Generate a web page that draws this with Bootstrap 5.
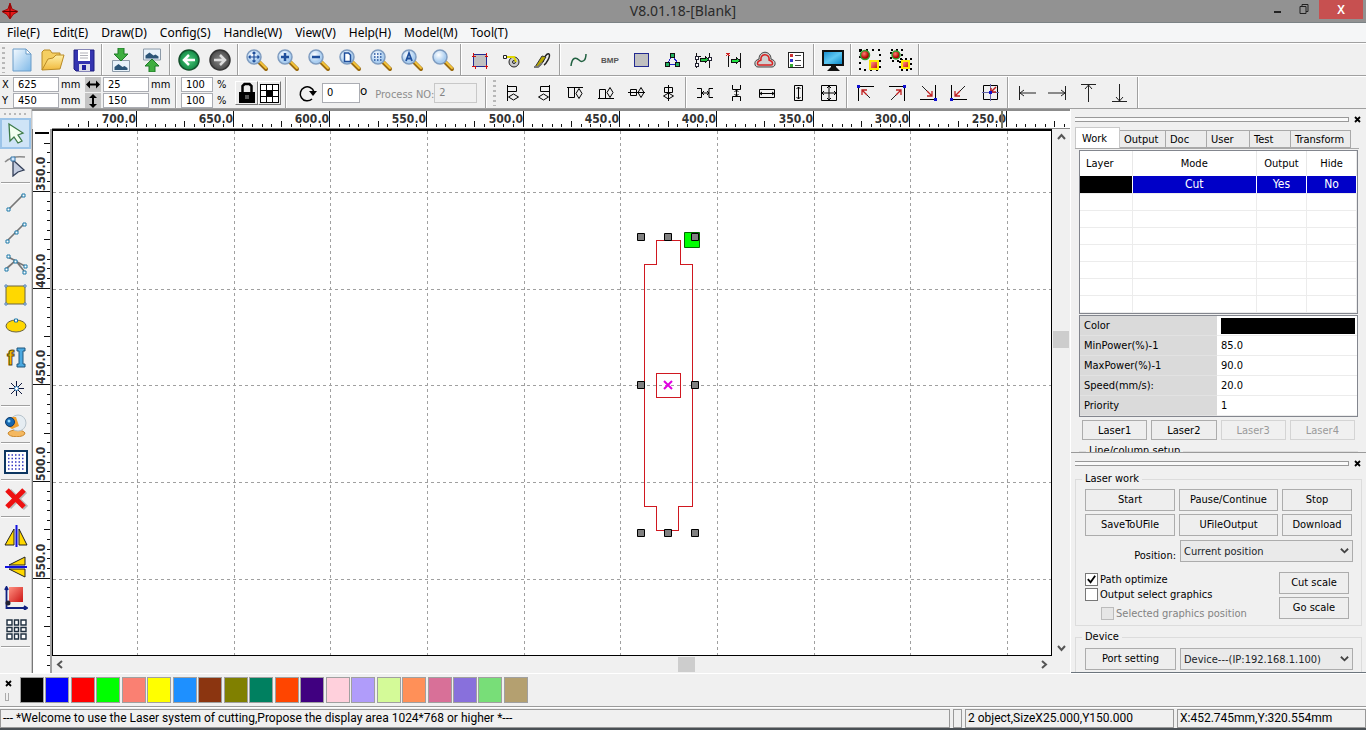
<!DOCTYPE html>
<html lang="en">
<head>
<meta charset="utf-8">
<meta name="viewport" content="width=device-width, initial-scale=1">
<title>V8.01.18-[Blank]</title>
<link href="https://cdn.jsdelivr.net/npm/bootstrap@5.3.0/dist/css/bootstrap.min.css" rel="stylesheet">
<style>
:root{--face:#f0f0f0;--line:#a0a0a0;--ui:"Noto Sans","Open Sans",sans-serif;--dlg:"DejaVu Sans Condensed","Noto Sans",sans-serif}
body{font:12px/16px var(--ui);color:#000;background:var(--face);overflow:hidden}
svg{display:block}
.titlebar{height:24px;background:#929292;border-bottom:1px solid #7b8285;font-size:14px;color:#2a2a2a}
.titlebar .side{width:132px}
.win{border:0;background:none;padding:0;width:26px;height:19px}
.win-x{background:#c75050;color:#fff;width:44px;font-size:12px;font-weight:600;margin-right:3px}
.menubar{height:21px;background:#f5f6f7;border-bottom:1px solid #a0a0a0}
.menubar a{color:#000;text-decoration:none;font-size:12px;line-height:19px;padding:0 6px 0 7px;white-space:nowrap}
.bar{height:34px;border-top:1px solid #fff;border-bottom:1px solid var(--line)}
.bar-b{height:33px}
.tool{border:0;background:none;padding:0;width:31px;height:31px;display:flex;align-items:center;justify-content:center;flex:none;border-radius:0}
.tool.active{background:#cfe4f7;border:2px solid #9cc4e8}
.tool svg{width:24px;height:24px}
.vsep{width:2px;height:31px;margin:0 2px;background:var(--line);border-right:1px solid #fff;flex:none}
.hsep{height:2px;margin:2px 1px;background:var(--line);border-bottom:1px solid #fff;flex:none}
.grip{width:3px;height:26px;background:repeating-linear-gradient(#b8b8b8 0 2px,transparent 2px 5px);margin:0 1px 0 2px;flex:none}
.hgrip{height:2px;margin:4px 4px 3px;background:repeating-linear-gradient(90deg,#b8b8b8 0 2px,transparent 2px 5px);flex:none}
.coords{display:grid;row-gap:1px;font:11px/15px var(--dlg)}
.coords-pos{grid-template-columns:13px 46px 26px 18px 46px 26px}
.coords-pct{grid-template-columns:32px 22px}
.coords label,.coords span{padding-left:2px}
.box{border:1px solid #abadb3;border-radius:0;background:#fff;font:11px/13px var(--dlg);padding:0 4px;height:15px;color:#000;min-width:0;width:100%}
.box-tall{height:20px}
.box:disabled{background:var(--face);color:#838383;border-color:#c8c8c8}
.tog{border:0;padding:0;background:#c4c4c4;margin-right:2px}
.tog svg{width:16px;height:15px}
.raised{border:1px solid #fff;border-right-color:#777;border-bottom-color:#777;background:#ececec;padding:0;width:23px;height:24px;flex:none}
.proc{color:#8d8d8d;font:11px/16px var(--dlg)}
.toolcol{width:32px;border-right:1px solid #c8c8c8}
.work{display:grid;grid-template-columns:20px minmax(0,1fr) 18px;grid-template-rows:18px minmax(0,1fr) 17px;border-top:2px solid #8c8c8c}
.ruler{background:#fff;overflow:hidden}
.ruler-h{grid-column:2/4;border-bottom:1px solid #888}
.ruler-v{grid-row:2/4;border-right:2px solid #a0a0a0;border-left:1px solid #777}
.ruler svg,.sheet svg{width:100%;height:100%}
.ruler text{font:bold 12px "DejaVu Sans Condensed","Noto Sans",sans-serif;fill:#333}
.sheet{border:solid #000;border-width:2px 1px 1px 1px;background:#fff;overflow:hidden}
.scr{background:var(--face);color:#444}
.thumb{background:#cdcdcd}
.dock{width:296px;border-left:1px solid #fff;font:11px/16px var(--dlg)}
.dock-top{height:344px;border-bottom:1px solid #9a9a9a;overflow:hidden}
.dock-cap{height:15px;padding:5px 4px 0 4px}
.dock-bars{height:5px;border:1px solid #999;border-left:0;background:#fafafa}
.xbtn{border:0;background:none;padding:0;width:9px;height:9px;flex:none}
.nav-tabs.dlg{--bs-nav-tabs-border-color:#a9a9a9;--bs-nav-tabs-border-radius:0;height:21px;margin:0 7px 0 4px;align-items:flex-end}
.dlg .nav-link{padding:0 0 0 4px;color:#000;border:1px solid #a9a9a9;border-left-width:0;background:#ececec;height:18px;line-height:17px;margin:0;text-align:left;border-radius:0;flex:none}
.dlg .nav-link.active{height:21px;background:#fff;border:1px solid #c9c9c9;border-bottom:0;padding-left:6px}
.frame{border:1px solid #83868e;background:#fff;margin:1px 8px}
.layers{font-size:11px;line-height:16px;margin:0;table-layout:fixed;width:100%}
.layers th{font-weight:400;height:25px;padding:0;text-align:center;border-right:1px solid #e8e8e8;vertical-align:middle}
.layers th:first-child{text-align:left;padding-left:6px}
.layers td{height:17px;padding:0;border-right:1px solid #ececec;border-bottom:1px solid #ececec;text-align:center;line-height:15px}
.layers .sel td{background:#0000c8;color:#fff;border-right-color:#fff;font-size:12px}
.layers .sel td:first-child{background:#000}
.props td{height:20px;padding:0 4px;border-bottom:1px solid #ececec}
.props td:first-child{background:#dadada;width:137px;border-color:#e2e2e2}
.props td+td{padding-right:2px}
.ink{background:#000;height:16px}
.lasers{padding:2px 11px 0}
.dbtn{font:11px/17px var(--dlg);border:1px solid #acacac;border-radius:0;background:#eee;color:#000;padding:0;height:20px;white-space:nowrap}
.dbtn:disabled{color:#9a9a9a;border-color:#d4d4d4;background:var(--face);opacity:1}
.tall{height:22px;line-height:20px}
.group{border:1px solid #dcdcdc;margin:0;padding:0 8px 0 9px;position:static}
.group legend{float:none;width:auto;font-size:11px;line-height:14px;margin:0 0 0 -3px;padding:0 3px}
.keys{display:grid;grid-template-columns:90px 99px 70px;gap:3px 4px;margin-top:3px}
.scales{gap:3px;width:70px}
.pick{font:11px/19px var(--dlg);border:1px solid #acacac;border-radius:0;padding:0 16px 0 3px;height:22px;width:173px;background:#eaeaea url("data:image/svg+xml,%3Csvg xmlns='http://www.w3.org/2000/svg' viewBox='0 0 10 8'%3E%3Cpath d='M1 1.500l4 4 4-4' fill='none' stroke='%23444' stroke-width='2'/%3E%3C/svg%3E") no-repeat right 3px center/9px 8px}
.form-check.tick{min-height:15px;margin:0;padding:0;display:flex;align-items:center;line-height:15px}
.tick .form-check-input{float:none;margin:0 2px 0 0;width:13px;height:13px;border-radius:0;border:1px solid #777;background-color:#fff;flex:none}
.tick .form-check-input:checked{background:#fff url("data:image/svg+xml,%3Csvg xmlns='http://www.w3.org/2000/svg' viewBox='0 0 12 12'%3E%3Cpath d='M2 5.500l3 3.500 5-7' fill='none' stroke='%23000' stroke-width='2'/%3E%3C/svg%3E") center/11px no-repeat}
.tick .form-check-input:disabled{background:#e6e6e6;border-color:#bbb;opacity:1}
.tick .form-check-input:disabled~label{color:#838383;opacity:1}
.palette{height:34px;border-top:1px solid #fff;border-bottom:1px solid #9a9a9a}
.swatches{width:508px}
.swatch{width:24px;height:26px;padding:0;border:1px solid #a0a0a0;border-radius:0;flex:none}
.status{height:21px;border-top:1px solid #fff;padding-top:1px;gap:3px;font-family:Roboto,"Noto Sans",sans-serif}
.cell{border:1px solid #999;height:19px;line-height:17px;padding:0 2px;white-space:nowrap;overflow:hidden}
.foot{height:2px;background:#4a5055}
.ln{fill:none;stroke:#000}
</style>
</head>
<body class="vh-100 d-flex flex-column">

<svg width="0" height="0" class="position-absolute" aria-hidden="true">
<defs>
<linearGradient id="gPage" x1="0" y1="0" x2="1" y2="1"><stop offset="0" stop-color="#f4faff"/><stop offset="1" stop-color="#7fb9e8"/></linearGradient>
<linearGradient id="gFold" x1="0" y1="0" x2="0" y2="1"><stop offset="0" stop-color="#fff0a8"/><stop offset="1" stop-color="#f0b93c"/></linearGradient>
<radialGradient id="gGreen"><stop offset="0" stop-color="#4ecb7c"/><stop offset="1" stop-color="#128a45"/></radialGradient>
<radialGradient id="gGrey"><stop offset="0" stop-color="#8a8a8a"/><stop offset="1" stop-color="#4a4a4a"/></radialGradient>
<radialGradient id="gLens" cx=".4" cy=".35"><stop offset="0" stop-color="#fff"/><stop offset="1" stop-color="#a9cdf0"/></radialGradient>
<radialGradient id="gBall" cx=".4" cy=".35"><stop offset="0" stop-color="#ff8070"/><stop offset="1" stop-color="#b00000"/></radialGradient>
<linearGradient id="gRed" x1="0" y1="0" x2="1" y2="1"><stop offset="0" stop-color="#ff9080"/><stop offset="1" stop-color="#cc1515"/></linearGradient>
<linearGradient id="gScreen" x1="0" y1="0" x2="1" y2="1"><stop offset="0" stop-color="#1a8fd0"/><stop offset=".5" stop-color="#5fc8f2"/><stop offset="1" stop-color="#0a88c8"/></linearGradient>
<marker id="mr" viewBox="0 0 6 6" refX="5" refY="3" markerWidth="6" markerHeight="6" orient="auto-start-reverse"><path d="M0 0L6 3L0 6z" fill="#c02020"/></marker>
</defs>
<symbol id="new" viewBox="0 0 24 24"><path d="M3 1h13l5 5v17H3z" fill="url(#gPage)" stroke="#6a9cc8"/><path d="M16 1v5h5z" fill="#fff" stroke="#6a9cc8"/></symbol>
<symbol id="open" viewBox="0 0 24 24"><path d="M1 22V4l2-2h6l2 3h8v5" fill="#f5cf62" stroke="#b98a25"/><path d="M1 22L7 11l5-1 3-3h8l-4 14z" fill="url(#gFold)" stroke="#b98a25"/></symbol>
<symbol id="save" viewBox="0 0 24 24"><path d="M2 2h20v21H4l-2-2z" fill="#3434b0" stroke="#1c1c80"/><path d="M6 2h12v11H6z" fill="#fff"/><path d="M8 5h8M8 7.500h8M8 10h8" stroke="#b0b0b8"/><path d="M7 16h11v7H7z" fill="#dcdce8"/><path d="M10 17h4v5h-4z" fill="#2020a0"/></symbol>
<symbol id="pic" viewBox="0 0 18 12"><path d="M.5.5h17v11H.5z" fill="#e8f2fa" stroke="#8c9aa8"/><path d="M2.500 10V7l4-3 4 3 2-1 3 2v2z" fill="#2c5578"/></symbol>
<symbol id="import" viewBox="0 0 24 24"><use href="#pic" x="3" y="12" width="18" height="12"/><path d="M9 0h6v6h4l-7 7-7-7h4z" fill="#3fae3f" stroke="#1f7a28"/></symbol>
<symbol id="export" viewBox="0 0 24 24"><use href="#pic" x="3" y="0" width="18" height="13"/><path d="M9 24h6v-6h4l-7-7-7 7h4z" fill="#3fae3f" stroke="#1f7a28"/></symbol>
<symbol id="undo" viewBox="0 0 24 24"><circle cx="12" cy="12" r="10" fill="url(#gGreen)" stroke="#14502c" stroke-width="1.500"/><path d="M18 12H8M12 7l-5 5 5 5" fill="none" stroke="#fff" stroke-width="2.500"/></symbol>
<symbol id="redo" viewBox="0 0 24 24"><circle cx="12" cy="12" r="10" fill="url(#gGrey)" stroke="#333" stroke-width="1.500"/><path d="M6 12h10M12 7l5 5-5 5" fill="none" stroke="#ddd" stroke-width="2.500"/></symbol>
<symbol id="lens" viewBox="0 0 24 24"><path d="M14 14l7 7" stroke="#9a6a10" stroke-width="4" stroke-linecap="round"/><path d="M15 14l6 6" stroke="#f4c43c" stroke-width="2" stroke-linecap="round"/><circle cx="9" cy="9" r="7" fill="url(#gLens)" stroke="#7f9cc0" stroke-width="1.500"/></symbol>
<symbol id="zpan" viewBox="0 0 24 24"><use href="#lens"/><path d="M9 4v10M4 9h10M7.500 5.500L9 4l1.500 1.500M7.500 12.500L9 14l1.500-1.500M5.500 7.500L4 9l1.500 1.500M12.500 7.500L14 9l-1.500 1.500" fill="none" stroke="#1f4f9c" stroke-width="1.200"/></symbol>
<symbol id="zin" viewBox="0 0 24 24"><use href="#lens"/><path d="M9 5v8M5 9h8" stroke="#1f4f9c" stroke-width="2.500"/></symbol>
<symbol id="zout" viewBox="0 0 24 24"><use href="#lens"/><path d="M5 9h8" stroke="#1f4f9c" stroke-width="2.500"/></symbol>
<symbol id="zpage" viewBox="0 0 24 24"><use href="#lens"/><path d="M6.500 5h4l2 2v6.500h-6z" fill="#fff" stroke="#1f4f9c" stroke-width="1.500"/></symbol>
<symbol id="zsel" viewBox="0 0 24 24"><use href="#lens"/><path d="M5 6h8M5 9h8M5 12h8" stroke="#1f4f9c" stroke-width="1.500" stroke-dasharray="1.500 1.500"/></symbol>
<symbol id="zall" viewBox="0 0 24 24"><use href="#lens"/><path d="M6 13L9 5l3 8M7 10.500h4" fill="none" stroke="#1f4f9c" stroke-width="1.800"/></symbol>
<symbol id="bound" viewBox="0 0 24 24" shape-rendering="crispEdges"><path d="M5.500 6.500h13v12h-13z" fill="#c0c0c0" stroke="#222a90"/><path d="M5 5v4M18 5v4M4 8h4M17 8h3M7 18v3M18 17v4M17 18h3M4 18h4" stroke="#d01010"/></symbol>
<symbol id="weld" viewBox="0 0 24 24"><circle cx="15" cy="14" r="5" fill="#c9c9c9" stroke="#222"/><circle cx="15" cy="14" r="1.500" fill="none" stroke="#222"/><path d="M6 9h9l2 5" fill="none" stroke="#e0d800" stroke-width="2"/><path d="M4.500 7.500h3v3h-3z" fill="#fff" stroke="#222"/></symbol>
<symbol id="brush" viewBox="0 0 24 24"><path d="M13 14c1-5 4-9 6-8 2 2-3 10-5 11" fill="none" stroke="#222" stroke-width="1.500"/><path d="M5 19l7-11 4 1-6 9z" fill="#b8a800" stroke="#333"/><path d="M4 19l4 0 4-4" fill="none" stroke="#777" stroke-width="2"/></symbol>
<symbol id="curve" viewBox="0 0 24 24"><path d="M4 18c1-9 5-9 8-6s7 1 7-6" fill="none" stroke="#206040" stroke-width="1.500"/></symbol>
<symbol id="bmp" viewBox="0 0 24 24"><text x="3" y="15" font-family="Liberation Sans,sans-serif" font-size="8" font-weight="bold" fill="#555">BMP</text></symbol>
<symbol id="fillr" viewBox="0 0 24 24" shape-rendering="crispEdges"><path d="M5.500 5.500h14v13h-14z" fill="#c0c0c0" stroke="#222a90"/></symbol>
<symbol id="nodes" viewBox="0 0 24 24" shape-rendering="crispEdges"><path d="M12 8L7 16h12z" fill="none" stroke="#2222cc"/><path d="M10 5h4v4h-4zM5 14h4v4H5zM15 14h4v4h-4z" fill="#20b060" stroke="#111"/></symbol>
<symbol id="gap1" viewBox="0 0 24 24" shape-rendering="crispEdges"><path d="M5.500 5v15M18.500 5v15M5 8h5" stroke="#111"/><path d="M9 10h5V8l4 3.500-4 3.500v-2H9z" fill="#20c040" stroke="#111"/><path d="M4 8h3v3H4zM4 15h3v3H4zM17 9h3v3h-3z" fill="#fff" stroke="#223"/></symbol>
<symbol id="gap2" viewBox="0 0 24 24" shape-rendering="crispEdges"><path d="M6.500 6v13M18.500 5v15" stroke="#111"/><path d="M9 11h5V9l4 3.500-4 3.500v-2H9z" fill="#20e040" stroke="#111"/><path d="M4 5l4 3M8 5L4 8" stroke="#d02020"/></symbol>
<symbol id="offs" viewBox="0 0 24 24"><path d="M4 12c-3 1-3 7 1 7h14c4 0 4-6 1-7l-2-1c0-9-12-9-12 0z" fill="#ccc" stroke="#444"/><path d="M6 13c-2 1-2 4 0 4h12c2 0 2-3 0-4l-2-1c1-7-9-7-8 0z" fill="#d0d0d0" stroke="#d82020" stroke-width="1.500"/></symbol>
<symbol id="checkl" viewBox="0 0 24 24" shape-rendering="crispEdges"><path d="M4.500 4.500h15v15h-15z" fill="#fff" stroke="#222"/><path d="M11 7.500h6M11 12.500h6M11 17.500h6" stroke="#444"/><path d="M6 6h3v3H6z" fill="#c33"/><path d="M6 11h3v3H6z" fill="#33c"/><path d="M6 16h3v3H6z" fill="#3a3"/></symbol>
<symbol id="screen" viewBox="0 0 24 24"><path d="M1 2h22v16H1z" fill="#111"/><path d="M3 4h18v12H3z" fill="url(#gScreen)"/><path d="M10 18h5v1l4 4H6l4-4z" fill="#111"/></symbol>
<symbol id="grp" viewBox="0 0 24 24"><path d="M2 2h20v20H2z" fill="none" stroke="#000" stroke-width="2" stroke-dasharray="2 4"/><circle cx="7" cy="7" r="4.500" fill="url(#gBall)" stroke="#30a030" stroke-width="1.500"/><path d="M11 12h10v10H11z" fill="#ffe800"/><path d="M13 14h6v6h-6z" fill="url(#gRed)"/></symbol>
<symbol id="ungrp" viewBox="0 0 24 24"><path d="M2 2h11v11H2zM11 11h11v11H11z" fill="none" stroke="#000" stroke-width="2" stroke-dasharray="2 3"/><circle cx="7" cy="7" r="4" fill="url(#gBall)" stroke="#30a030" stroke-width="1.500"/><path d="M12 12h9v9h-9z" fill="#ffe800"/><path d="M14 14h5v5h-5z" fill="url(#gRed)"/></symbol>
<symbol id="al" viewBox="0 0 24 24"><path class="ln" d="M6.500 4v16M6.500 5.500h9v5h-9zM7.500 16l5-3 5 3-5 3z"/></symbol>
<symbol id="ar" viewBox="0 0 24 24"><path class="ln" d="M17.500 4v16M17.500 5.500h-9v5h9zM6.500 16l5-3 5 3-5 3z"/></symbol>
<symbol id="at" viewBox="0 0 24 24"><path class="ln" d="M4 6.500h16M5.500 6.500v10h6v-10M16 7.500l3 5-3 5-3-5z"/></symbol>
<symbol id="ab" viewBox="0 0 24 24"><path class="ln" d="M4 17.500h16M5.500 17.500v-9h6v9M16 16.500l3-5-3-5-3 5z"/></symbol>
<symbol id="am" viewBox="0 0 24 24"><path class="ln" d="M3 11.500h17M5.500 8.500h6v6h-6zM16 16.500l3-5-3-5-3 5z"/></symbol>
<symbol id="ac" viewBox="0 0 24 24"><path class="ln" d="M12.500 4v16M8.500 6.500h8v5h-8zM7.500 15l5-3 5 3-5 3z"/></symbol>
<symbol id="dh" viewBox="0 0 24 24"><path class="ln" d="M4 7.500h4.500v9H4M20 7.500h-4v9h4M8.500 12h7.500M11 10l-2 2 2 2M14 10l2 2-2 2"/></symbol>
<symbol id="dv" viewBox="0 0 24 24"><path class="ln" d="M8.500 4v4.500h8V4M8.500 20v-4.500h8V20M12.500 8.500v7M10.500 11l2-2 2 2M10.500 13l2 2 2-2"/></symbol>
<symbol id="sw" viewBox="0 0 24 24"><path class="ln" d="M4.500 8.500h15v8h-15zM5 12.500h14M7 11l-2 1.500L7 14M17 11l2 1.500-2 1.500"/></symbol>
<symbol id="sh" viewBox="0 0 24 24"><path class="ln" d="M8.500 4.500h8v15h-8zM12.500 6v12M10.500 8l2-2 2 2M10.500 16l2 2 2-2"/></symbol>
<symbol id="sb" viewBox="0 0 24 24"><path class="ln" d="M4.500 4.500h15v15h-15zM5 12h14M12 5v14M10 7l2-2 2 2M10 17l2 2 2-2M7 10l-2 2 2 2M17 10l2 2-2 2"/></symbol>
<symbol id="ctl" viewBox="0 0 24 24"><path class="ln" d="M4.500 20V5.500H20"/><path d="M16 17L12 13" stroke="#222"/><path d="M13 14L8 9M8 14V9h5" fill="none" stroke="#c02020" stroke-width="1.300"/><path d="M3 4h3v3H3z" fill="#1010d0"/></symbol>
<symbol id="ctr" viewBox="0 0 24 24"><path class="ln" d="M19.500 20V5.500H4"/><path d="M6 19l6-6" stroke="#222"/><path d="M11 14l5-5M16 14V9h-5" fill="none" stroke="#c02020" stroke-width="1.300"/><path d="M18 4h3v3h-3z" fill="#1010d0"/></symbol>
<symbol id="cbr" viewBox="0 0 24 24"><path class="ln" d="M19.500 4v14.500H4"/><path d="M6 5l6 6" stroke="#222"/><path d="M11 10l5 5M16 10v5h-5" fill="none" stroke="#c02020" stroke-width="1.300"/><path d="M18 17h3v3h-3z" fill="#1010d0"/></symbol>
<symbol id="cbl" viewBox="0 0 24 24"><path class="ln" d="M4.500 4v14.500H20"/><path d="M18 5l-6 6" stroke="#222"/><path d="M13 10l-5 5M8 10v5h5" fill="none" stroke="#c02020" stroke-width="1.300"/><path d="M3 17h3v3H3z" fill="#1010d0"/></symbol>
<symbol id="ccc" viewBox="0 0 24 24"><path class="ln" d="M5.500 4.500h14v14h-14z"/><path d="M12.500 3v17M4 11.500h17" stroke="#66a"/><path d="M18 6l-5 5M13 7v4h5" fill="none" stroke="#c02020" stroke-width="1.500"/><path d="M11 10h3v3h-3z" fill="#1010d0"/></symbol>
<symbol id="el" viewBox="0 0 24 24"><path d="M4.500 5v14M5 12h16M9 9l-4 3 4 3" fill="none" stroke="#222"/></symbol>
<symbol id="er" viewBox="0 0 24 24"><path d="M19.500 5v14M2 12h17M15 9l4 3-4 3" fill="none" stroke="#222"/></symbol>
<symbol id="et" viewBox="0 0 24 24"><path d="M4 3.500h15M11.500 4v17M8 8l3.500-4L15 8" fill="none" stroke="#222"/></symbol>
<symbol id="eb" viewBox="0 0 24 24"><path d="M4 20.500h15M11.500 3v17M8 16l3.500 4 3.500-4" fill="none" stroke="#222"/></symbol>
<symbol id="arrow" viewBox="0 0 24 24"><path d="M5 2l14 9-5 2 4 6-4 2-4-6-4 4z" fill="#f2fff0" stroke="#3d7a48" stroke-width="1.300"/></symbol>
<symbol id="nodeed" viewBox="0 0 24 24"><path d="M1 9c5-5 12-6 20-5" fill="none" stroke="#8a8a8a" stroke-width="1.500"/><path d="M9 7v16l5-4 6-2z" fill="#c4cde0" stroke="#333f58" stroke-width="1.300"/><path d="M7 4h4v4H7z" fill="#d4e8ff" stroke="#3577a8"/></symbol>
<symbol id="line" viewBox="0 0 24 24"><path d="M4 20L19 5" stroke="#777" stroke-width="1.700"/><path d="M3 18h3v3H3zM18 4h3v3h-3z" fill="#fff" stroke="#1c78a8"/></symbol>
<symbol id="pline" viewBox="0 0 24 24"><path d="M3 20L20 3" stroke="#777" stroke-width="1.700"/><path d="M2 19h3v3H2zM19 2h3v3h-3zM11 10h3v3h-3z" fill="#fff" stroke="#1c78a8"/></symbol>
<symbol id="bez" viewBox="0 0 24 24"><path d="M2 17l9-8 10 5M4 5l8 4 8 10" fill="none" stroke="#777" stroke-width="1.700"/><path d="M1 16h3v3H1zM3 3h3v3H3zM10 8h3v3h-3zM20 13h3v3h-3zM19 19h3v3h-3z" fill="#fff" stroke="#1c78a8"/></symbol>
<symbol id="rect" viewBox="0 0 24 24"><path d="M2 3h19v18H2z" fill="#ffd800" stroke="#6b6440"/><path d="M1 2h2v2H1zM20 2h2v2h-2zM1 20h2v2H1zM20 20h2v2h-2z" fill="#fff" stroke="#5080b8"/></symbol>
<symbol id="ell" viewBox="0 0 24 24"><ellipse cx="12" cy="12" rx="10" ry="6" fill="#ffd800" stroke="#6b6440"/><path d="M10.500 5h3v3h-3z" fill="#fff" stroke="#1c78a8"/></symbol>
<symbol id="txt" viewBox="0 0 24 24"><text x="3" y="20" font-family="Liberation Sans,sans-serif" font-size="21" font-weight="bold" fill="#f5c000" stroke="#5a4a10">f</text><path d="M13 3h8v3h-2v13h2v3h-8v-3h2V6h-2z" fill="#4aa8e0" stroke="#20567c"/></symbol>
<symbol id="star" viewBox="0 0 24 24"><path d="M12.500 5v15M5 12.500h15M7 7l11 11M18 7L7 18" stroke="#101a40"/><circle cx="12.500" cy="12.500" r="2" fill="#fff" stroke="#2a7ab8"/></symbol>
<symbol id="cam" viewBox="0 0 24 24"><path d="M4 20c2-4 15-4 17 0 0 5-17 5-17 0z" fill="#f4b860" stroke="#c8862c"/><circle cx="14" cy="10" r="8" fill="#e6edf2" stroke="#b8c4cc"/><path d="M5 4h7l3 9-7 3-6-4z" fill="#f0a030"/><circle cx="6" cy="9" r="4.500" fill="#1668b0" stroke="#0c3c70"/><circle cx="5" cy="8" r="1.500" fill="#8fd8ff"/></symbol>
<symbol id="dots" viewBox="0 0 24 24"><path d="M1 1h22v22H1z" fill="#fff" stroke="#0c3560" stroke-width="2"/><path d="M4 5h17M4 8.500h17M4 12h17M4 15.500h17M4 19h17" stroke="#3038c0" stroke-width="1.500" stroke-dasharray="1.500 2"/></symbol>
<symbol id="del" viewBox="0 0 24 24"><path d="M5 4l17 17M21 4L5 20" stroke="#b8b8b8" stroke-width="6"/><path d="M3 3l17 17M20 3L3 20" stroke="#ee1010" stroke-width="5"/></symbol>
<symbol id="mirh" viewBox="0 0 24 24"><path d="M10 5v16H1zM15 5v16h8z" fill="#ffd800" stroke="#222"/><path d="M12.500 1v22" stroke="#1010e0" stroke-width="2"/></symbol>
<symbol id="mirv" viewBox="0 0 24 24"><path d="M21 2v8H5zM21 22v-8H5z" fill="#ffd800" stroke="#222"/><path d="M1 12h22" stroke="#1010e0" stroke-width="2"/></symbol>
<symbol id="orig" viewBox="0 0 24 24"><path d="M5 1h14v15H5z" fill="url(#gRed)"/><path d="M2.500 2v20H23M1 4l1.500-3L4 4M20 20l3 2-3 2" fill="none" stroke="#102080" stroke-width="1.800"/><circle cx="4" cy="17" r="2.500" fill="#223"/></symbol>
<symbol id="arr" viewBox="0 0 24 24"><path d="M3 3h5v5H3zM10.500 3h4v5h-4zM17 3h5v5h-5zM3 10.500h5v4H3zM10.500 10.500h4v4h-4zM17 10.500h5v4h-5zM3 17h5v5H3zM10.500 17h4v5h-4zM17 17h5v5h-5z" fill="#fff" stroke="#203040" stroke-width="1.400"/></symbol>
<symbol id="xx" viewBox="0 0 9 9"><path d="M2 2l5 5M7 2L2 7" stroke="#000" stroke-width="1.800"/></symbol>
</svg>

<header class="titlebar d-flex align-items-center">
  <div class="side ps-0"><svg width="20" height="20" viewBox="0 0 20 20"><path d="M10 2l2 6 6 2.500-5 3-3 4.500-3-4.500-5-3L8 8z" fill="#e81818" stroke="#a00808"/><path d="M10 4v13M3 10.500h14" stroke="#600"/></svg></div>
  <div class="flex-fill text-center">V8.01.18-[Blank]</div>
  <div class="side d-flex justify-content-end align-self-start">
    <button class="win" aria-label="Minimize"><svg width="26" height="19"><path d="M11 12h7" stroke="#222" stroke-width="2"/></svg></button>
    <button class="win me-1" aria-label="Restore"><svg width="26" height="19"><path d="M11 6.500h6v7h-6zM13 6V4.500h6v7h-2" fill="none" stroke="#222"/></svg></button>
    <button class="win win-x" aria-label="Close">X</button>
  </div>
</header>
<nav class="menubar d-flex" aria-label="Menu">
  <a href="#">File(F)</a><a href="#">Edit(E)</a><a href="#">Draw(D)</a><a href="#">Config(S)</a><a href="#">Handle(W)</a><a href="#">View(V)</a><a href="#">Help(H)</a><a href="#">Model(M)</a><a href="#">Tool(T)</a>
</nav>
<div class="bar d-flex align-items-center" role="toolbar" aria-label="Standard"><span class="grip"></span><div class="d-flex" data-tools="new open save | import export | undo redo | zpan zin zout zpage zsel zall lens | bound weld brush | curve bmp fillr nodes gap1 gap2 offs checkl | screen | grp ungrp |"></div></div>

<div class="bar bar-b d-flex align-items-center" role="toolbar" aria-label="Properties">
  <div class="coords coords-pos">
    <label for="px">X</label><input class="box" id="px" value="625"><span>mm</span><button class="tog" aria-label="Width"><svg viewBox="0 0 16 15"><path d="M1 7.500l4-4v3h6v-3l4 4-4 4v-3H5v3z"/></svg></button><input class="box" aria-label="Width" value="25"><span>mm</span>
    <label for="py">Y</label><input class="box" id="py" value="450"><span>mm</span><button class="tog" aria-label="Height"><svg viewBox="0 0 16 15"><path d="M8 1l4 4H9v6h3l-4 4-4-4h3V5H4z"/></svg></button><input class="box" aria-label="Height" value="150"><span>mm</span>
  </div>
  <span class="vsep m-0 me-1"></span>
  <div class="coords coords-pct">
    <input class="box" aria-label="Scale X" value="100"><span class="ps-1">%</span>
    <input class="box" aria-label="Scale Y" value="100"><span class="ps-1">%</span>
  </div>
  <button class="raised" aria-label="Lock"><svg width="21" height="22" viewBox="0 0 21 22"><path d="M6.500 10V4l2-2h5l2 2v6" fill="none" stroke="#000" stroke-width="2.500"/><path d="M3 10h16v11H3z"/><path d="M9 13h4v4H9z" fill="#555"/></svg></button>
  <button class="raised" aria-label="Anchor"><svg width="21" height="22" viewBox="0 0 21 22" shape-rendering="crispEdges"><path d="M1.500 2.500h18v18h-18z" fill="#fff" stroke="#000"/><path d="M7.500 2v18M13.500 2v18M1 8.500h18M1 14.500h18" stroke="#000"/><path d="M8 9h5v5H8z"/></svg></button>
  <span class="vsep mx-1"></span>
  <button class="tool" aria-label="Rotate"><svg viewBox="0 0 24 24"><path d="M17 18a7 7 0 1 1 2-7" fill="none" stroke="#000" stroke-width="1.500"/><path d="M14 10h8l-4 5z"/></svg></button>
  <label class="d-flex align-items-center"><input class="box box-tall" size="1" style="width:38px" aria-label="Angle" value="0"><span class="align-self-start">o</span></label>
  <label class="proc text-nowrap ps-2 pt-1" for="pno">Process NO:</label>
  <input class="box box-tall" style="width:43px" id="pno" value="2" disabled>
  <span class="vsep ms-2 me-1"></span><span class="grip"></span>
  <div class="d-flex" data-tools="al ar at ab am ac | dh dv sw sh sb | ctl ctr cbr cbl ccc | el er et eb |"></div>
</div>

<main class="flex-fill d-flex overflow-hidden">
  <div class="toolcol d-flex flex-column flex-shrink-0" role="toolbar" aria-label="Drawing"><span class="hgrip"></span><div data-cols="arrow nodeed | line pline bez rect ell txt star | cam | dots | del | mirh mirv orig arr |"></div></div>
  <div class="work flex-fill">
    <div class="ruler border-start"></div>
    <div class="ruler ruler-h"><svg id="rh"></svg></div>
    <div class="ruler ruler-v"><svg id="rv"></svg></div>
    <div class="sheet"><svg>
      <g id="grid" stroke="#a0a0a0" stroke-dasharray="3 3" shape-rendering="crispEdges"></g>
      <g fill="none" stroke="#d01820" shape-rendering="crispEdges"><path d="M603.500 109.500h24v24h12v242h-14v24h-22v-24h-12v-242h12z"/><path d="M603.500 242.500h24v24h-24z"/></g>
      <path d="M631.500 101.500h15v15h-15z" fill="#0f0" stroke="#060"/>
      <path d="M611 250l8 8M619 250l-8 8" stroke="#e000e0" stroke-width="2"/>
      <g fill="#808080" stroke="#000"><path d="M584.500 102.500h7v7h-7zM611.500 102.500h7v7h-7zM638.500 102.500h7v7h-7zM584.500 250.500h7v7h-7zM638.500 250.500h7v7h-7zM584.500 398.500h7v7h-7zM611.500 398.500h7v7h-7zM638.500 398.500h7v7h-7z"/></g>
    </svg></div>
    <div class="scr d-flex flex-column align-items-center justify-content-between py-1"><svg width="9" height="8"><path d="M1 6l3.500-4L8 6" fill="none" stroke="#555" stroke-width="2"/></svg><div class="thumb" style="width:16px;height:17px;margin-bottom:106px"></div><svg width="9" height="8"><path d="M1 2l3.500 4L8 2" fill="none" stroke="#555" stroke-width="2"/></svg></div>
    <div class="scr d-flex align-items-center justify-content-between px-1"><svg width="8" height="9"><path d="M6 1L2 4.500 6 8" fill="none" stroke="#555" stroke-width="2"/></svg><div class="thumb" style="width:17px;height:15px;margin-left:268px"></div><svg width="8" height="9"><path d="M2 1l4 3.500L2 8" fill="none" stroke="#555" stroke-width="2"/></svg></div>
    <div></div>
  </div>

  <aside class="dock flex-shrink-0 d-flex flex-column">
    <section class="dock-top flex-shrink-0">
      <div class="dock-cap d-flex align-items-center"><div class="dock-bars flex-fill me-1"></div><button class="xbtn" aria-label="Close"><svg width="9" height="9"><use href="#xx"/></svg></button></div>
      <div class="nav nav-tabs dlg flex-nowrap mt-1" role="tablist">
        <button class="nav-link active" style="width:45px">Work</button><button class="nav-link" style="width:46px">Output</button><button class="nav-link" style="width:41px">Doc</button><button class="nav-link" style="width:43px">User</button><button class="nav-link" style="width:41px">Test</button><button class="nav-link" style="width:60px">Transform</button>
      </div>
      <div class="frame">
        <table class="layers" id="layers">
          <colgroup><col style="width:52px"><col><col style="width:50px"><col style="width:50px"></colgroup>
          <thead><tr><th>Layer</th><th>Mode</th><th>Output</th><th>Hide</th></tr></thead>
          <tbody><tr class="sel"><td></td><td>Cut</td><td>Yes</td><td>No</td></tr></tbody>
        </table>
      </div>
      <div class="frame">
        <table class="props w-100">
          <tr><td>Color</td><td><div class="ink"></div></td></tr>
          <tr><td>MinPower(%)-1</td><td>85.0</td></tr>
          <tr><td>MaxPower(%)-1</td><td>90.0</td></tr>
          <tr><td>Speed(mm/s):</td><td>20.0</td></tr>
          <tr><td>Priority</td><td>1</td></tr>
        </table>
      </div>
      <div class="lasers d-flex gap-1">
        <button class="dbtn flex-fill">Laser1</button><button class="dbtn flex-fill">Laser2</button><button class="dbtn flex-fill" disabled>Laser3</button><button class="dbtn flex-fill" disabled>Laser4</button>
      </div>
      <fieldset class="group mx-2 mt-1 pb-4"><legend>Line/column setup</legend></fieldset>
    </section>
    <section class="flex-fill overflow-hidden border-bottom border-secondary">
      <div class="dock-cap d-flex align-items-center"><div class="dock-bars flex-fill me-1"></div><button class="xbtn" aria-label="Close"><svg width="9" height="9"><use href="#xx"/></svg></button></div>
      <fieldset class="group mx-1 mt-1 pb-1"><legend>Laser work</legend>
        <div class="keys">
          <button class="dbtn tall">Start</button><button class="dbtn tall">Pause/Continue</button><button class="dbtn tall">Stop</button>
          <button class="dbtn tall">SaveToUFile</button><button class="dbtn tall">UFileOutput</button><button class="dbtn tall">Download</button>
        </div>
        <div class="d-flex justify-content-end pt-1"><label class="pt-2 pe-1" for="pos">Position:</label><select class="form-select pick" id="pos"><option>Current position</option></select></div>
        <div class="d-flex justify-content-between pt-2">
          <div>
            <div class="form-check tick"><input class="form-check-input" type="checkbox" id="c1" checked><label for="c1">Path optimize</label></div>
            <div class="form-check tick"><input class="form-check-input" type="checkbox" id="c2"><label for="c2">Output select graphics</label></div>
            <div class="form-check tick ms-3 pt-1"><input class="form-check-input" type="checkbox" id="c3" disabled><label for="c3">Selected graphics position</label></div>
          </div>
          <div class="scales d-flex flex-column me-1"><button class="dbtn tall">Cut scale</button><button class="dbtn tall">Go scale</button></div>
        </div>
      </fieldset>
      <fieldset class="group mx-1 mt-1 pb-4"><legend>Device</legend>
        <div class="d-flex justify-content-between pt-1"><button class="dbtn tall" style="width:91px">Port setting</button><select class="form-select pick" aria-label="Device"><option>Device---(IP:192.168.1.100)</option></select></div>
      </fieldset>
    </section>
  </aside>
</main>

<div class="palette d-flex align-items-center flex-shrink-0">
  <div style="width:20px" class="d-flex flex-column align-items-start gap-1"><button class="xbtn ms-1" aria-label="Close"><svg width="9" height="9"><use href="#xx"/></svg></button><svg width="12" height="10"><path d="M5.500 1v7M8.500 1v7M5 8.500h4" stroke="#aaa"/></svg></div>
  <div class="swatches d-flex justify-content-between" id="sw20"></div>
</div>
<footer class="status d-flex flex-shrink-0">
  <div class="cell flex-fill">--- *Welcome to use the Laser system of cutting,Propose the display area 1024*768 or higher *---</div>
  <div class="cell" style="width:9px"></div>
  <div class="cell" style="width:209px">2 object,SizeX25.000,Y150.000</div>
  <div class="cell" style="width:189px">X:452.745mm,Y:320.554mm</div>
</footer>
<div class="foot flex-shrink-0"></div>

<script src="https://cdn.jsdelivr.net/npm/bootstrap@5.3.0/dist/js/bootstrap.bundle.min.js"></script>
<script>
function tools(el, list, sep) {
  el.innerHTML = list.trim().split(/\s+/).map(function (n) {
    return n === '|' ? '<div class="' + sep + '"></div>'
      : '<button class="tool' + (n === 'arrow' ? ' active' : '') + '" aria-label="' + n + '"><svg><use href="#' + n + '"/></svg></button>';
  }).join('');
}
document.querySelectorAll('[data-tools]').forEach(function (e) { tools(e, e.dataset.tools, 'vsep'); });
document.querySelectorAll('[data-cols]').forEach(function (e) { tools(e, e.dataset.cols, 'hsep'); });

// Empty layer rows under the single used layer
document.querySelector('#layers tbody').insertAdjacentHTML('beforeend', '<tr><td></td><td></td><td></td><td></td></tr>'.repeat(7));

// Colour palette
document.getElementById('sw20').innerHTML = ['#000000','#0000ff','#ff0000','#00ff00','#fa8072','#ffff00','#1e90ff','#8b3510','#808000','#008060','#ff4500','#400080','#ffd0dc','#b09cfa','#d4fa98','#ff9058','#d87098','#8870dc','#78de78','#b4a070']
  .map(function (c) { return '<button class="swatch" aria-label="' + c + '" style="background:' + c + '"></button>'; }).join('');

// Rulers and grid: 50 mm takes STEP pixels
var STEP = 96.67, X0 = 84, Y0 = 61, i, x, y, h = '', v = '', g = '', len;
for (i = -8; i < 200; i++) {
  x = Math.round(X0 + i * STEP / 10);
  len = i % 10 === 0 ? 18 : i % 5 === 0 ? 6 : 3;
  if (x > 10) h += '<path d="M' + (x + .5) + ' 16v-' + len + '" stroke="#111"/>';
  y = Math.round(Y0 + i * STEP / 10);
  len = i % 10 === 0 ? 18 : i % 5 === 0 ? 6 : 3;
  if (y > 5) v += '<path d="M17 ' + (y + 1.5) + 'h-' + len + '" stroke="#111"/>';
  if (i % 10 === 0) {
    var n = i / 10;
    if (n < 10) h += '<text x="' + x + '" y="12" text-anchor="end">' + (700 - n * 50) + '.0</text>';
    if (n < 5) v += '<text transform="translate(12 ' + (y + 1) + ') rotate(-90)">' + (350 + n * 50) + '.0</text>';
    g += '<path d="M' + (x + .5) + ' 0V2000M0 ' + (y + .5) + 'H4000"/>';
  }
}
h += '<path d="M950 0v18" stroke="#776" stroke-width="2"/>';
v += '<path d="M2 4h14" stroke="#000" stroke-width="2"/>';
document.getElementById('rh').innerHTML = h;
document.getElementById('rv').innerHTML = v;
document.getElementById('grid').innerHTML = g;
</script>
</body>
</html>
